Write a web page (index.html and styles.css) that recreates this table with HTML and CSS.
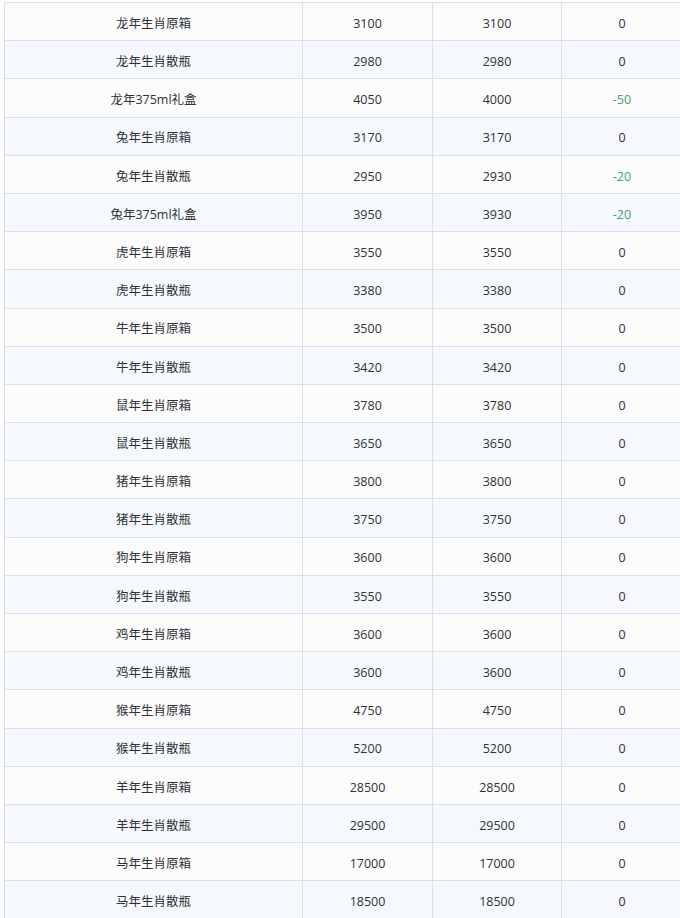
FILE: index.html
```html
<!DOCTYPE html>
<html lang="zh-CN">
<head>
<meta charset="utf-8">
<title>价格表</title>
<link rel="stylesheet" href="styles.css">
</head>
<body>
<div class="wrap">
  <div class="table">
    <div class="row"><div class="c name">龙年生肖原箱</div><div class="c a">3100</div><div class="c b">3100</div><div class="c d">0</div></div>
    <div class="row"><div class="c name">龙年生肖散瓶</div><div class="c a">2980</div><div class="c b">2980</div><div class="c d">0</div></div>
    <div class="row"><div class="c name">龙年375ml礼盒</div><div class="c a">4050</div><div class="c b">4000</div><div class="c d down">-50</div></div>
    <div class="row"><div class="c name">兔年生肖原箱</div><div class="c a">3170</div><div class="c b">3170</div><div class="c d">0</div></div>
    <div class="row"><div class="c name">兔年生肖散瓶</div><div class="c a">2950</div><div class="c b">2930</div><div class="c d down">-20</div></div>
    <div class="row"><div class="c name">兔年375ml礼盒</div><div class="c a">3950</div><div class="c b">3930</div><div class="c d down">-20</div></div>
    <div class="row"><div class="c name">虎年生肖原箱</div><div class="c a">3550</div><div class="c b">3550</div><div class="c d">0</div></div>
    <div class="row"><div class="c name">虎年生肖散瓶</div><div class="c a">3380</div><div class="c b">3380</div><div class="c d">0</div></div>
    <div class="row"><div class="c name">牛年生肖原箱</div><div class="c a">3500</div><div class="c b">3500</div><div class="c d">0</div></div>
    <div class="row"><div class="c name">牛年生肖散瓶</div><div class="c a">3420</div><div class="c b">3420</div><div class="c d">0</div></div>
    <div class="row"><div class="c name">鼠年生肖原箱</div><div class="c a">3780</div><div class="c b">3780</div><div class="c d">0</div></div>
    <div class="row"><div class="c name">鼠年生肖散瓶</div><div class="c a">3650</div><div class="c b">3650</div><div class="c d">0</div></div>
    <div class="row"><div class="c name">猪年生肖原箱</div><div class="c a">3800</div><div class="c b">3800</div><div class="c d">0</div></div>
    <div class="row"><div class="c name">猪年生肖散瓶</div><div class="c a">3750</div><div class="c b">3750</div><div class="c d">0</div></div>
    <div class="row"><div class="c name">狗年生肖原箱</div><div class="c a">3600</div><div class="c b">3600</div><div class="c d">0</div></div>
    <div class="row"><div class="c name">狗年生肖散瓶</div><div class="c a">3550</div><div class="c b">3550</div><div class="c d">0</div></div>
    <div class="row"><div class="c name">鸡年生肖原箱</div><div class="c a">3600</div><div class="c b">3600</div><div class="c d">0</div></div>
    <div class="row"><div class="c name">鸡年生肖散瓶</div><div class="c a">3600</div><div class="c b">3600</div><div class="c d">0</div></div>
    <div class="row"><div class="c name">猴年生肖原箱</div><div class="c a">4750</div><div class="c b">4750</div><div class="c d">0</div></div>
    <div class="row"><div class="c name">猴年生肖散瓶</div><div class="c a">5200</div><div class="c b">5200</div><div class="c d">0</div></div>
    <div class="row"><div class="c name">羊年生肖原箱</div><div class="c a">28500</div><div class="c b">28500</div><div class="c d">0</div></div>
    <div class="row"><div class="c name">羊年生肖散瓶</div><div class="c a">29500</div><div class="c b">29500</div><div class="c d">0</div></div>
    <div class="row"><div class="c name">马年生肖原箱</div><div class="c a">17000</div><div class="c b">17000</div><div class="c d">0</div></div>
    <div class="row"><div class="c name">马年生肖散瓶</div><div class="c a">18500</div><div class="c b">18500</div><div class="c d">0</div></div>
  </div>
</div>
</body>
</html>
```

FILE: styles.css
```css
html, body {
  margin: 0;
  padding: 0;
  background: #ffffff;
  overflow: hidden;
}

.wrap {
  padding: 2px 0 0 4px;
  width: 680px;
  height: 918px;
  overflow: hidden;
  box-sizing: border-box;
}

.table {
  width: 677px;
  border-top: 1px solid #dcdfe6;
  border-left: 1px solid #dcdfe6;
  font-family: "Open Sans", "Noto Sans CJK SC", "Microsoft YaHei", sans-serif;
  font-size: 12.5px;
  color: #303133;
}

.row {
  display: grid;
  grid-template-columns: 298px 130px 129px 1fr;
  height: 38.2px;
  box-sizing: border-box;
  border-bottom: 1px solid #dcdfe6;
  background: #fcfcfc;
}

.row:nth-child(even) {
  background: #f5f9fe;
}

.c {
  display: flex;
  align-items: center;
  justify-content: center;
  padding-top: 5px;
  border-right: 1px solid #dcdfe6;
  line-height: 1;
}

.c.d {
  border-right: none;
}

.down {
  color: #3aa66a;
}
```
